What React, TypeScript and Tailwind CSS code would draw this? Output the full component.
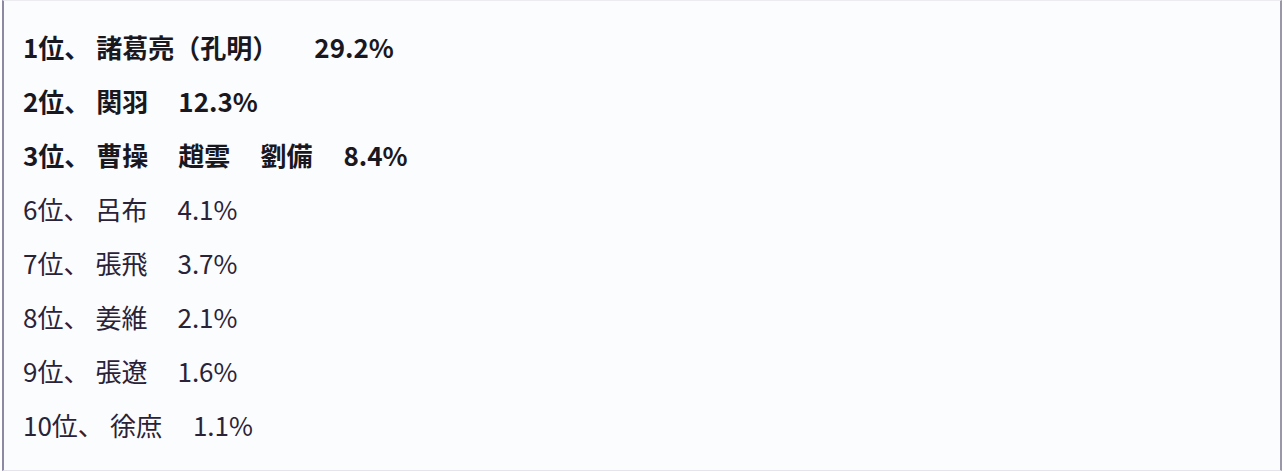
const rows = [
  { rank: '1位、', names: ['諸葛亮（孔明）'], pct: '29.2%', gap: 'ml-[36px]', bold: true },
  { rank: '2位、', names: ['関羽'], pct: '12.3%', gap: 'ml-[30px]', bold: true },
  { rank: '3位、', names: ['曹操', '趙雲', '劉備'], pct: '8.4%', gap: 'ml-[31px]', bold: true },
  { rank: '6位、', names: ['呂布'], pct: '4.1%', gap: 'ml-[30px]', bold: false },
  { rank: '7位、', names: ['張飛'], pct: '3.7%', gap: 'ml-[30px]', bold: false },
  { rank: '8位、', names: ['姜維'], pct: '2.1%', gap: 'ml-[30px]', bold: false },
  { rank: '9位、', names: ['張遼'], pct: '1.6%', gap: 'ml-[30px]', bold: false },
  { rank: '10位、', names: ['徐庶'], pct: '1.1%', gap: 'ml-[31px]', bold: false },
];

export default function App() {
  return (
    <div className="w-[1284px] h-[472px] bg-white">
      <div
        className="ml-[2px] w-[1280px] h-[471px] border-l-2 border-l-[#8d88a3] border-r-2 border-r-[#9a98a8] border-t border-t-[#ececf0] border-b border-b-[#e4e4ea] bg-[#fbfcfe] pl-[19px] pt-[18px]"
        style={{ fontFamily: '"Noto Sans CJK JP", "Noto Sans", sans-serif' }}
      >
        {rows.map((r) => (
          <div
            key={r.rank}
            className={`flex items-center h-[54px] text-[26px] ${
              r.bold ? 'font-semibold text-[#1a181f]' : 'font-normal text-[#2a2338]'
            }`}
          >
            <span>{r.rank}</span>
            {r.names.map((n, i) => (
              <span key={n} className={i === 0 ? 'ml-[6px]' : 'ml-[30px]'}>
                {n}
              </span>
            ))}
            <span className={r.gap}>{r.pct}</span>
          </div>
        ))}
      </div>
    </div>
  );
}
